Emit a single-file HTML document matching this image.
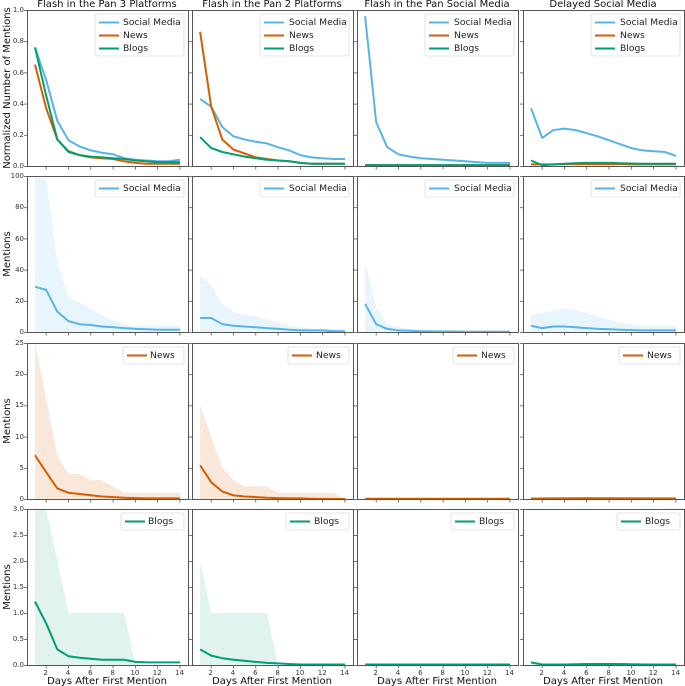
<!DOCTYPE html>
<html><head><meta charset="utf-8"><style>
body{margin:0;background:#fff;}
svg{display:block;font-family:"DejaVu Sans","Liberation Sans",sans-serif;}
.t{font-size:7px;fill:#333;}
.l{font-size:9.2px;fill:#222;}
.h{font-size:10px;fill:#111;}
</style></head><body>
<svg id="s" width="685" height="686" viewBox="0 0 685 686" xmlns="http://www.w3.org/2000/svg">
<g id="g"></g>
<text class="h" x="107" y="7" text-anchor="middle">Flash in the Pan 3 Platforms</text>
<text class="h" x="272" y="7" text-anchor="middle">Flash in the Pan 2 Platforms</text>
<text class="h" x="437" y="7" text-anchor="middle">Flash in the Pan Social Media</text>
<text class="h" x="603" y="7" text-anchor="middle">Delayed Social Media</text>
<text class="h" transform="translate(10,88) rotate(-90)" text-anchor="middle">Normalized Number of Mentions</text>
<text class="h" transform="translate(10,254) rotate(-90)" text-anchor="middle">Mentions</text>
<text class="h" transform="translate(10,421) rotate(-90)" text-anchor="middle">Mentions</text>
<text class="h" transform="translate(10,587) rotate(-90)" text-anchor="middle">Mentions</text>
<g class="t" text-anchor="end">
<text x="24" y="168">0.0</text><text x="24" y="137">0.2</text><text x="24" y="106">0.4</text><text x="24" y="75">0.6</text><text x="24" y="43">0.8</text><text x="24" y="12">1.0</text>
<text x="24" y="334">0</text><text x="24" y="303">20</text><text x="24" y="272">40</text><text x="24" y="241">60</text><text x="24" y="209">80</text><text x="24" y="178">100</text>
<text x="24" y="501">0</text><text x="24" y="470">5</text><text x="24" y="439">10</text><text x="24" y="407">15</text><text x="24" y="376">20</text><text x="24" y="345">25</text>
<text x="24" y="667">0.0</text><text x="24" y="641">0.5</text><text x="24" y="615">1.0</text><text x="24" y="589">1.5</text><text x="24" y="563">2.0</text><text x="24" y="537">2.5</text><text x="24" y="511">3.0</text>
</g>
<text class="h" x="107" y="684" text-anchor="middle">Days After First Mention</text>
<text class="h" x="272" y="684" text-anchor="middle">Days After First Mention</text>
<text class="h" x="437" y="684" text-anchor="middle">Days After First Mention</text>
<text class="h" x="603" y="684" text-anchor="middle">Days After First Mention</text>
<g class="t" text-anchor="middle">
<text x="45.6" y="675">2</text><text x="68" y="675">4</text><text x="90.3" y="675">6</text><text x="112.6" y="675">8</text><text x="134.9" y="675">10</text><text x="157.2" y="675">12</text><text x="179.5" y="675">14</text>
<text x="210.6" y="675">2</text><text x="233" y="675">4</text><text x="255.3" y="675">6</text><text x="277.6" y="675">8</text><text x="299.9" y="675">10</text><text x="322.2" y="675">12</text><text x="344.5" y="675">14</text>
<text x="375.6" y="675">2</text><text x="398" y="675">4</text><text x="420.3" y="675">6</text><text x="442.6" y="675">8</text><text x="464.9" y="675">10</text><text x="487.2" y="675">12</text><text x="509.5" y="675">14</text>
<text x="541.6" y="675">2</text><text x="564" y="675">4</text><text x="586.3" y="675">6</text><text x="608.6" y="675">8</text><text x="630.9" y="675">10</text><text x="653.2" y="675">12</text><text x="675.5" y="675">14</text>
</g>
<g class="l">
<text x="123" y="25">Social Media</text><text x="123" y="38">News</text><text x="123" y="51">Blogs</text>
<text x="289" y="25">Social Media</text><text x="289" y="38">News</text><text x="289" y="51">Blogs</text>
<text x="454" y="25">Social Media</text><text x="454" y="38">News</text><text x="454" y="51">Blogs</text>
<text x="620" y="25">Social Media</text><text x="620" y="38">News</text><text x="620" y="51">Blogs</text>
<text x="123" y="191">Social Media</text><text x="289" y="191">Social Media</text><text x="454" y="191">Social Media</text><text x="620" y="191">Social Media</text>
<text x="150" y="358">News</text><text x="316" y="358">News</text><text x="481" y="358">News</text><text x="647" y="358">News</text>
<text x="148" y="524">Blogs</text><text x="314" y="524">Blogs</text><text x="479" y="524">Blogs</text><text x="645" y="524">Blogs</text>
</g>
</svg>
<script>
var NS="http://www.w3.org/2000/svg",g=document.getElementById('g');
function el(n,a){var e=document.createElementNS(NS,n);for(var k in a)e.setAttribute(k,a[k]);g.appendChild(e);return e;}
var L=[27,192,357,523],W=161,T=[10,176,343,509],H=156,MX=[1,100,25,3];
var C={s:'#56B4E9',n:'#D55E00',b:'#009E73'};
function X(c,d){return L[c]+W*(0.05+0.9*(d-1)/13);}
function Y(r,v){return T[r]+H-H*Math.min(v,MX[r])/MX[r];}
function line(c,r,d,col){var p='';for(var i=0;i<14;i++)p+=(i?'L':'M')+X(c,i+1).toFixed(1)+' '+Y(r,d[i]).toFixed(1);el('path',{d:p,fill:'none',stroke:col,'stroke-width':2,'stroke-linejoin':'round'});}
function band(c,r,d,col,op){var p='M'+X(c,1)+' '+Y(r,0);for(var i=0;i<14;i++)p+='L'+X(c,i+1).toFixed(1)+' '+Y(r,d[i]).toFixed(1);p+='L'+X(c,14)+' '+Y(r,0)+'Z';el('path',{d:p,fill:col,'fill-opacity':op});}
var D={
r0:[
{s:[.76,.55,.29,.165,.125,.1,.085,.075,.05,.04,.035,.03,.03,.04],n:[.65,.37,.17,.095,.07,.055,.05,.045,.03,.02,.015,.015,.015,.015],b:[.76,.45,.17,.09,.07,.06,.055,.05,.045,.035,.03,.025,.025,.025]},
{s:[.43,.38,.25,.19,.17,.155,.145,.12,.1,.07,.055,.05,.045,.045],n:[.86,.38,.17,.105,.08,.055,.045,.035,.03,.02,.015,.015,.015,.015],b:[.185,.115,.09,.075,.06,.05,.04,.035,.03,.02,.015,.015,.015,.015]},
{s:[.96,.28,.12,.075,.06,.05,.045,.04,.035,.03,.025,.02,.02,.02],n:[.005,.005,.005,.005,.005,.005,.005,.005,.005,.005,.005,.005,.005,.005],b:[.006,.006,.006,.006,.006,.006,.006,.006,.006,.006,.006,.006,.006,.006]},
{s:[.37,.18,.23,.24,.23,.21,.19,.165,.14,.115,.1,.095,.09,.065],n:[.01,.01,.01,.012,.012,.012,.012,.012,.012,.01,.01,.01,.01,.01],b:[.035,.005,.01,.015,.018,.02,.02,.02,.018,.016,.015,.015,.015,.015]}]};
var Z=[0,0,0,0,0,0,0,0,0,0,0,0,0,0];
var R=[
[[29,27,13,7,5,4.5,3.5,3,2.5,2,1.8,1.5,1.5,1.5],[100,97,45,22,19,15,11,8,5,4,4,4,4,4]],
[[9,9,5,4,3.5,3,2.5,2,1.5,1,1,1,.5,.5],[36,30,18,13,11,10,8,6,4,3,2,2,2,2]],
[[18,5,2,1,.8,.5,.4,.3,.3,.2,.2,.2,.2,.2],[44,16,5,3,2,1.5,1,1,1,1,1,1,1,1]],
[[4,2.5,3.5,3.5,3,2.5,2,1.8,1.5,1.2,1,1,1,1],[11,12,14,15,14,12,10,8,6,5,4,4,4,4]]];
var N=[
[[7,4.3,1.7,1,.8,.6,.4,.3,.2,.15,.1,.1,.1,.1],[25,16,7,4,4,3,3,2,1,1,1,1,1,1]],
[[5.4,2.7,1.2,.6,.4,.3,.2,.15,.1,.1,.05,0,0,0],[15,10,5,3,2,2,2,1,1,1,1,1,1,0]],
[[.05,.05,.05,.05,.05,.05,.05,.05,.05,.05,.05,.05,.05,.05],Z],
[[.08,.08,.1,.1,.12,.12,.12,.12,.1,.1,.1,.08,.08,.08],[0,.3,.3,.3,.3,.3,.3,.3,.3,.3,.3,.3,.3,.3]]];
var B=[
[[1.22,.8,.3,.17,.14,.12,.1,.1,.1,.06,.05,.05,.05,.05],[3,3,2,1,1,1,1,1,1,0,0,0,0,0]],
[[.3,.18,.13,.1,.08,.06,.04,.03,.02,.01,.01,.01,.01,.01],[2,1,1,1,1,1,1,0,0,0,0,0,0,0]],
[[.01,.01,.01,.01,.01,.01,.01,.01,.01,.01,.01,.01,.01,.01],Z],
[[.05,.01,.01,.01,.015,.02,.02,.02,.02,.015,.01,.01,.01,.01],[.06,0,0,0,0,0,0,0,0,0,0,0,0,0]]];
for(var c=0;c<4;c++){
 band(c,1,R[c][1],C.s,.13);band(c,2,N[c][1],C.n,.15);band(c,3,B[c][1],C.b,.12);
 var d=D.r0[c];line(c,0,d.s,C.s);line(c,0,d.n,C.n);line(c,0,d.b,C.b);
 line(c,1,R[c][0],C.s);line(c,2,N[c][0],C.n);line(c,3,B[c][0],C.b);
 for(var r=0;r<4;r++){
  el('rect',{x:L[c]+.5,y:T[r]+.5,width:W,height:H,fill:'none',stroke:'#555','stroke-width':1});
  for(var k=2;k<=14;k+=2)el('line',{x1:X(c,k),x2:X(c,k),y1:T[r]+H+.5,y2:T[r]+H+3.5,stroke:'#555','stroke-width':.8});
  for(var j=0;j<=(r==3?6:5);j++){var yy=T[r]+.5+H*j/(r==3?6:5);el('line',{x1:L[c]-3,x2:L[c]+.5,y1:yy,y2:yy,stroke:'#555','stroke-width':.8});}
  var lx,ly,lw,lh;
  if(r==0){lx=L[c]+68;ly=T[r]+4;lw=W-72;lh=42;}
  else if(r==1){lx=L[c]+68;ly=T[r]+4;lw=W-72;lh=17;}
  else if(r==2){lx=L[c]+96;ly=T[r]+4;lw=W-100;lh=17;}
  else{lx=L[c]+94;ly=T[r]+4;lw=W-98;lh=17;}
  el('rect',{x:lx,y:ly,width:lw,height:lh,rx:2,fill:'#fff','fill-opacity':.85,stroke:'#ddd','stroke-width':.8});
  var cols=r==0?[C.s,C.n,C.b]:[[C.s,C.s,C.n,C.b][r]];
  for(var q=0;q<cols.length;q++)el('line',{x1:lx+4,x2:lx+24,y1:ly+8.5+13*q,y2:ly+8.5+13*q,stroke:cols[q],'stroke-width':2});
 }
}
</script>
</body></html>
